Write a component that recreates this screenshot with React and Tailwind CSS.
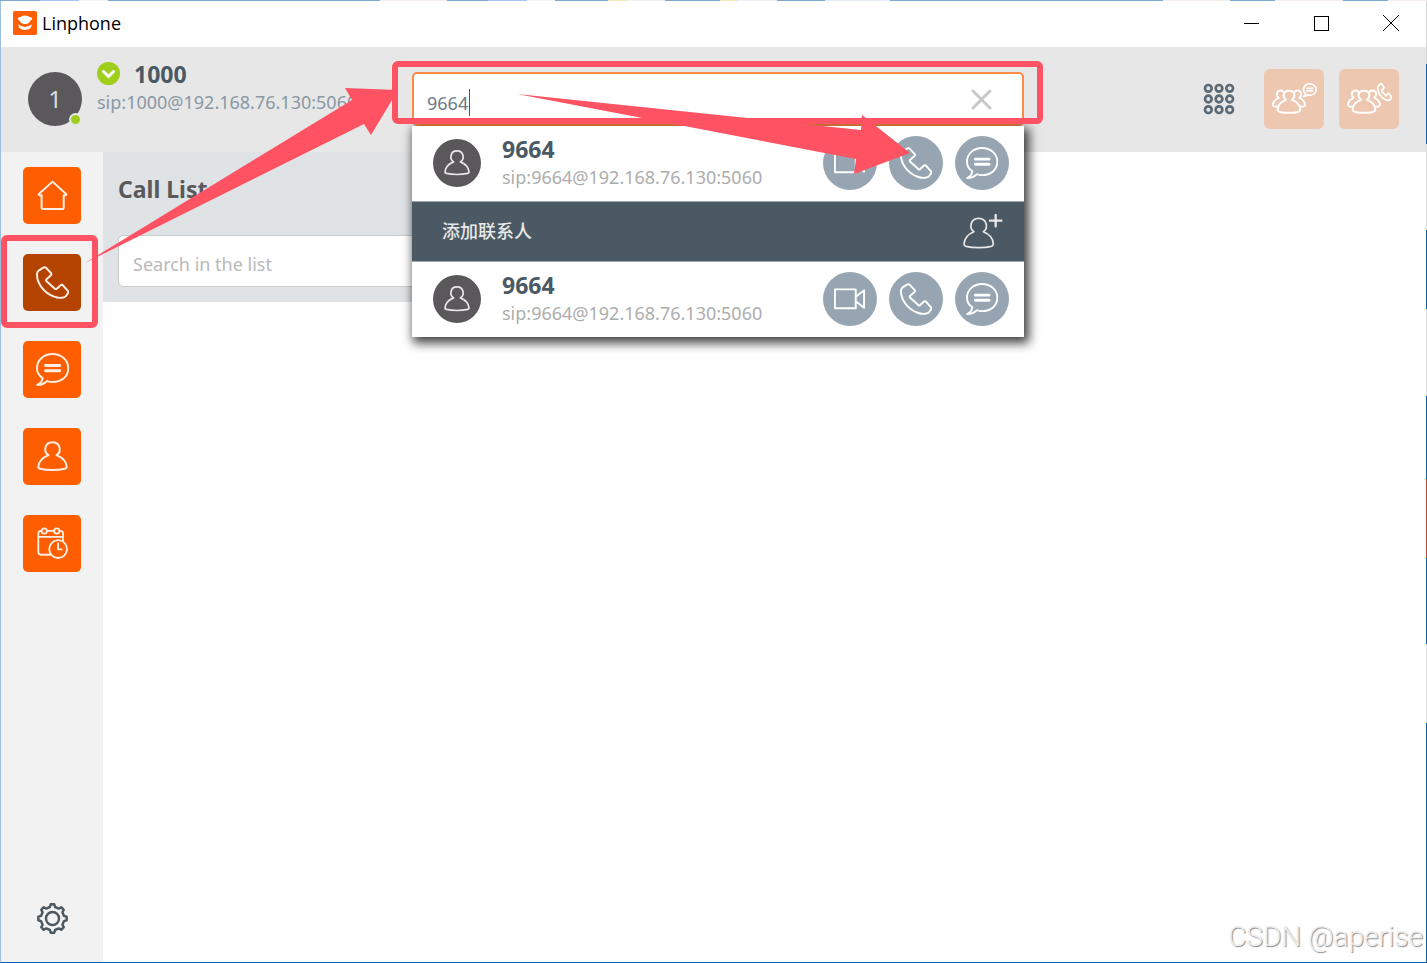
import React, { useState } from 'react';

const desktopTop = [
  [40, '#7fa9cf'], [39, '#a9c4f5'], [29, '#f3f3f3'], [272, '#7fa9cf'], [67, '#f5eded'],
  [41, '#7fa9cf'], [39, '#a9c4f5'], [28, '#f3f3f3'], [53, '#7fa9cf'], [19, '#f3e6b8'],
  [38, '#f0f0f0'], [55, '#7fa9cf'], [18, '#f3e6b8'], [39, '#f0f0f0'], [48, '#7fa9cf'],
  [65, '#e6ecf8'], [273, '#7fa9cf'], [67, '#f5eded'], [45, '#7fa9cf'], [68, '#f5eded'],
  [45, '#7fa9cf'], [39, '#f5eded'],
];

const desktopRight = [
  [63, '#d6d6d6'], [80, '#0a5fae'], [86, '#dcdcdc'], [79, '#0a5fae'], [87, '#dcdcdc'],
  [83, '#0a5fae'], [80, '#c8472f'], [86, '#0a5fae'], [79, '#e0e0e0'], [240, '#0a5fae'],
];

const PERSON = 'M38 46C22 37 25 7 50 7S78 37 62 46C82 54 92 66 93 82Q93 86 88 87Q70 91 50 91T12 87Q7 86 7 82C8 66 18 54 38 46Z';
const PHONE = 'M30 5L46 22Q48 25 45 28L32 40Q29 43 32 46L57 69Q60 71 63 69L75 58Q79 55 82 59L97 76Q99 79 97 82L91 91Q89 94 84 95Q70 99 55 93C24 82 2 52 3 24Q4 16 9 13L22 5Q26 2 30 5Z';
const CHAT = 'M20 76C8 68 3 58 3 46C3 21 24 3 50 3S98 21 98 46S77 88 50 88Q41 88 34 85Q22 97 4 97Q18 90 20 76Z';

function Icon({ children, className = 'size-[33px]', viewBox = '0 0 100 100', width = 6 }) {
  return (
    <svg
      className={className}
      viewBox={viewBox}
      fill="none"
      stroke="currentColor"
      strokeWidth={width}
      strokeLinecap="round"
      strokeLinejoin="round"
      aria-hidden="true"
    >
      {children}
    </svg>
  );
}

function HomeIcon() {
  return (
    <Icon>
      <path d="M50 8L92 46Q90 52 84 49V86Q84 91 79 91H22Q17 91 17 86V49Q10 52 8 46Z" />
    </Icon>
  );
}

function PhoneIcon({ className }) {
  return <Icon className={className}><path d={PHONE} /></Icon>;
}

function ChatIcon({ className }) {
  return (
    <Icon className={className}>
      <path d={CHAT} />
      <path d="M29 38H72M29 54H72" strokeWidth="9" />
    </Icon>
  );
}

function PersonIcon({ className }) {
  return <Icon className={className}><path d={PERSON} /></Icon>;
}

function CalendarIcon() {
  return (
    <Icon width={5.5}>
      <path d="M16 12H15Q7 12 7 20V76Q7 84 15 84H43M34 12H54M72 12H74Q82 12 82 20V40M7 30H82" />
      <circle cx="25" cy="12" r="8" />
      <circle cx="63" cy="12" r="8" />
      <circle cx="67" cy="67" r="27" />
      <path d="M67 50V68H78" />
    </Icon>
  );
}

function CameraIcon({ className }) {
  return (
    <Icon className={className}>
      <path d="M3 20H68V79H3ZM68 43L94 23V77L68 57" />
    </Icon>
  );
}

function AddPersonIcon() {
  return (
    <Icon className="h-[35px] w-10" viewBox="0 0 120 105" width={5}>
      <path d="M33 53C17 43 22 13 47 13S77 43 61 53C81 61 91 73 91 90Q91 95 85 97Q70 101 47 101T9 97Q3 95 3 90C4 73 13 61 33 53Z" />
      <path d="M98 3V37M81 20H115" strokeWidth="7" />
    </Icon>
  );
}

function GroupIcon({ children }) {
  return (
    <Icon className="h-[31px] w-[45px]" viewBox="0 0 135 92" width={6}>
      <path d="M42 50C30 40 33 23 51 23S72 40 60 50C76 55 84 65 85 80Q84 89 51 89T17 80C18 65 26 55 42 50Z" />
      <path d="M33 25C26 18 12 24 15 36Q16 41 20 44Q3 52 3 66Q4 71 17 71" />
      <path d="M69 25C76 18 90 24 87 36Q86 41 82 44Q99 52 99 66Q98 71 86 71" />
      {children}
    </Icon>
  );
}

function GearIcon() {
  const teeth = 8;
  const points = [];
  for (let i = 0; i < teeth; i++) {
    [[-0.28, 38], [-0.16, 46], [0.16, 46], [0.28, 38]].forEach(([offset, radius]) => {
      const angle = ((i + offset) * 2 * Math.PI) / teeth;
      points.push(`${50 + radius * Math.sin(angle)},${50 - radius * Math.cos(angle)}`);
    });
  }
  return (
    <Icon className="size-[31px]" width={8}>
      <polygon points={points.join(' ')} />
      <circle cx="50" cy="50" r="21" />
    </Icon>
  );
}

function KeypadIcon() {
  return (
    <Icon className="size-8" viewBox="0 0 96 96" width={8}>
      {[16, 48, 80].map((y) => [16, 48, 80].map((x) => <circle key={`${x}-${y}`} cx={x} cy={y} r="10" />))}
    </Icon>
  );
}

function Logo() {
  return (
    <svg className="size-6" viewBox="0 0 72 72" aria-hidden="true">
      <rect width="72" height="72" rx="5" fill="#ff5e00" />
      <path d="M14 21L27 16Q36 11 45 16L58 21Q57 27 52 29Q47 39 36 39T20 29Q15 27 14 21Z" fill="#fff" />
      <path d="M16 40Q25 48 36 48T56 40Q56 57 36 57T16 40Z" fill="#fff" />
    </svg>
  );
}

const navItems = [
  { label: 'Home', icon: HomeIcon },
  { label: 'Calls', icon: PhoneIcon },
  { label: 'Conversations', icon: ChatIcon },
  { label: 'Contacts', icon: PersonIcon },
  { label: 'Meetings', icon: CalendarIcon },
];

const actions = [
  { label: 'Video call', icon: CameraIcon },
  { label: 'Call', icon: PhoneIcon },
  { label: 'Chat', icon: ChatIcon },
];

function TitleBar() {
  return (
    <div className="flex h-[46px] shrink-0 items-center bg-white pb-0.5 pl-3">
      <Logo />
      <span className="ml-[5px] flex-1 font-['Open_Sans','Noto_Sans',sans-serif] text-[18px] text-black">Linphone</span>
      <div className="flex text-black">
        <button aria-label="Minimize" className="flex h-11 w-[70px] items-center justify-center">
          <span className="h-px w-[15px] bg-black" />
        </button>
        <button aria-label="Maximize" className="flex h-11 w-[70px] items-center justify-center">
          <span className="size-[15px] border border-black" />
        </button>
        <button aria-label="Close" className="flex h-11 w-[70px] items-center justify-center">
          <svg className="size-4" viewBox="0 0 16 16" stroke="currentColor"><path d="M0 0L16 16M16 0L0 16" /></svg>
        </button>
      </div>
    </div>
  );
}

function ResultRow({ name, address }) {
  return (
    <div className="flex h-[75px] items-center bg-white pr-[15px] pl-[21px]">
      <div className="flex size-12 shrink-0 items-center justify-center rounded-full bg-[#5a585b] text-[#e8e8e8]">
        <PersonIcon className="size-7" />
      </div>
      <div className="ml-[21px] flex-1">
        <p className="text-[23px] leading-7 font-bold text-[#4b5964]">{name}</p>
        <p className="text-[18px] leading-[29px] text-[#adadad]">{address}</p>
      </div>
      <div className="flex gap-3">
        {actions.map(({ label, icon: ActionIcon }) => (
          <button
            key={label}
            aria-label={`${label} ${name}`}
            className="flex size-[54px] items-center justify-center rounded-full bg-[#96a5b1] text-white"
          >
            <ActionIcon className="size-8" />
          </button>
        ))}
      </div>
    </div>
  );
}

function SearchBox() {
  const [query, setQuery] = useState('9664');

  return (
    <div className="relative h-[54px] flex-1">
      <input
        aria-label="Search contact"
        value={query}
        onChange={(e) => setQuery(e.target.value)}
        className="size-full rounded-[5px] border-2 border-[#fd8a45] bg-white pt-2 pr-16 pl-[13px] text-[18px] text-[#6b7a86] outline-none"
      />
      <span className="absolute top-[17px] left-[57px] h-[27px] w-px bg-[#4b5964]" />
      <button aria-label="Clear" onClick={() => setQuery('')} className="absolute top-[17px] right-8 text-[#c8c8c8]">
        <svg className="size-[21px]" viewBox="0 0 21 21" stroke="currentColor" strokeWidth="3" strokeLinecap="round">
          <path d="M2 2L19 19M19 2L2 19" />
        </svg>
      </button>
      <div className="absolute inset-x-0 top-full shadow-[3px_4px_10px_2px_rgba(0,0,0,0.75)]">
        <ResultRow name="9664" address="sip:9664@192.168.76.130:5060" />
        <button className="flex h-[61px] w-full items-center justify-between border-y border-[#a0a6ab] bg-[#4b5964] pr-[21px] pl-[30px] text-[18px] font-medium text-[#e8e8e8]">
          添加联系人
          <AddPersonIcon />
        </button>
        <ResultRow name="9664" address="sip:9664@192.168.76.130:5060" />
      </div>
    </div>
  );
}

function Header() {
  return (
    <header className="z-10 flex h-[105px] shrink-0 items-center bg-[#e7e7e7] pb-0.5">
      <div className="flex w-[411px] shrink-0 items-center pl-[27px]">
        <div className="relative flex size-[54px] shrink-0 items-center justify-center rounded-full bg-[#5a585b] text-[24px] text-[#d5dce2]">
          1
          <span className="absolute right-0 bottom-0 size-[13px] rounded-full border-2 border-[#e7e7e7] bg-[#9fcf1c]" />
        </div>
        <div className="mb-[21px] ml-[15px]">
          <div className="flex items-center gap-[14px]">
            <svg className="size-[23px]" viewBox="0 0 23 23" fill="none" aria-hidden="true">
              <circle cx="11.500" cy="11.500" r="11.500" fill="#9fcf1c" />
              <path d="M6.500 9.500L11.500 14.500L16.500 9.500" stroke="#fff" strokeWidth="3" strokeLinecap="round" />
            </svg>
            <span className="text-[23px] leading-7 font-bold text-[#4b5964]">1000</span>
          </div>
          <p className="text-[18px] leading-[29px] text-[#8a98a4]">sip:1000@192.168.76.130:5060</p>
        </div>
      </div>
      <SearchBox />
      <div className="flex w-[402px] shrink-0 items-center justify-end pr-[27px]">
        <button aria-label="Keypad" className="mr-[29px] text-[#5c6a75]"><KeypadIcon /></button>
        <button aria-label="Group chat" className="mr-[15px] flex size-15 items-center justify-center rounded-md bg-[#eec7b1] text-white">
          <GroupIcon>
            <g transform="translate(93 1) scale(.4)" strokeWidth="13">
              <path d={CHAT} />
              <path d="M29 36H72M29 55H72" />
            </g>
          </GroupIcon>
        </button>
        <button aria-label="Conference call" className="flex size-15 items-center justify-center rounded-md bg-[#eec7b1] text-white">
          <GroupIcon>
            <path d={PHONE} transform="translate(91 0) scale(.43 .53)" strokeWidth="11" />
          </GroupIcon>
        </button>
      </div>
    </header>
  );
}

function Sidebar() {
  return (
    <nav className="flex w-[102px] shrink-0 flex-col items-center bg-[#f2f2f2] pt-[15px] pb-[28px]">
      <div className="flex flex-col gap-[30px]">
        {navItems.map(({ label, icon: NavIcon }) => (
          <button
            key={label}
            aria-label={label}
            className={`flex h-[57px] w-[58px] items-center justify-center rounded-[5px] text-[#ffeee3] ${
              label === 'Calls' ? 'bg-[#b54300]' : 'bg-[#ff5e00]'
            }`}
          >
            <NavIcon />
          </button>
        ))}
      </div>
      <button aria-label="Settings" className="mt-auto text-[#4b5964]"><GearIcon /></button>
    </nav>
  );
}

function CallList() {
  return (
    <section className="h-[150px] w-[400px] shrink-0 bg-[#dfe3e6] pl-[15px]">
      <h1 className="pt-[23px] text-[23px] leading-7 font-bold text-[#5a585b]">Call List</h1>
      <input
        aria-label="Search in the list"
        placeholder="Search in the list"
        className="mt-8 h-[52px] w-full rounded-[5px] border border-[#cbcbcb] bg-white pt-1.5 pl-[14px] text-[18px] outline-none placeholder:text-[#b9b9b9]"
      />
    </section>
  );
}

// Red marks drawn over the window: calls tab -> search box -> call button
function Annotations() {
  return (
    <svg className="pointer-events-none absolute top-0 left-0 z-20 h-[340px] w-[1050px]" viewBox="0 0 1050 340" aria-hidden="true">
      <g fill="none" stroke="#ff5263" strokeWidth="6">
        <rect x="4" y="238" width="91" height="87" rx="3" />
        <rect x="395" y="64" width="645" height="57" rx="3" />
      </g>
      <g fill="#ff5263">
        <path d="M85 263L352 100L345 88L398 90L371 135L364 124Z" />
        <path d="M517 94L861 130L862 115L910 153L854 174L856 159Z" />
      </g>
    </svg>
  );
}

function Edge({ segments, className }) {
  return (
    <div className={className}>
      {segments.map(([size, color], i) => (
        <div key={i} style={{ flexGrow: size, backgroundColor: color }} />
      ))}
    </div>
  );
}

function App() {
  return (
    <div className="relative flex h-screen flex-col overflow-hidden bg-white font-['Noto_Sans','Noto_Sans_CJK_SC',sans-serif]">
      <Edge segments={desktopTop} className="flex h-px shrink-0" />
      <div className="flex min-h-0 flex-1">
        <div className="flex min-w-0 flex-1 flex-col border-b border-l border-b-[#0a5fae] border-l-[#9bbfe0]">
          <TitleBar />
          <Header />
          <main className="flex min-h-0 flex-1">
            <Sidebar />
            <CallList />
          </main>
        </div>
        <Edge segments={desktopRight} className="flex w-px shrink-0 flex-col" />
      </div>
      <Annotations />
      <span className="absolute right-1 bottom-2 font-[Roboto,sans-serif] text-[28px] leading-9 font-light text-[#efefef] [text-shadow:1px_1px_1px_#8a8a8a]">
        CSDN @aperise
      </span>
    </div>
  );
}

export default App;
